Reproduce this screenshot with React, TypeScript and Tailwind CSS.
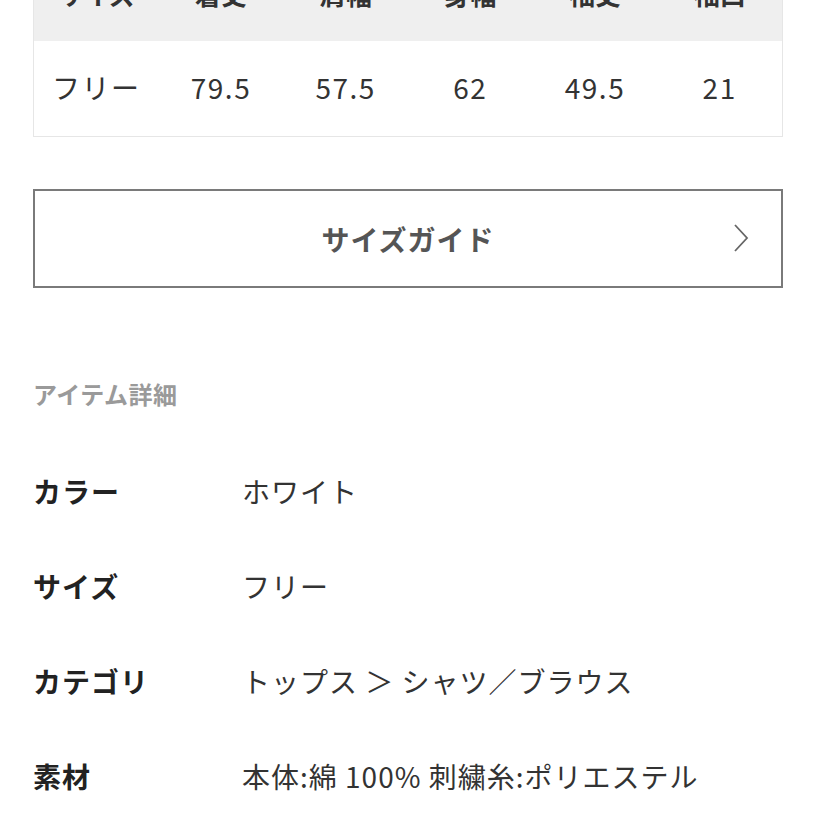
const headers = ['サイズ', '着丈', '肩幅', '身幅', '袖丈', '袖口'];
const values = ['フリー', '79.5', '57.5', '62', '49.5', '21'];

const details = [
  { label: 'カラー', value: 'ホワイト' },
  { label: 'サイズ', value: 'フリー' },
  { label: 'カテゴリ', value: 'トップス ＞ シャツ／ブラウス' },
  { label: '素材', value: '本体:綿 100% 刺繍糸:ポリエステル' },
];

const App = () => {
  return (
    <div
      className="w-[817px] h-[817px] overflow-hidden bg-white"
      style={{ fontFamily: '"Noto Sans CJK JP", "Noto Sans", sans-serif' }}
    >
      <div className="-mt-[56px] px-[33px]">
        <div className="w-[750px] border border-[#e6e6e6]">
          <div className="grid grid-cols-6 h-[96px] bg-[#efefef] items-center text-center text-[26px] font-bold text-[#333]">
            {headers.map((h) => (
              <div key={h}>{h}</div>
            ))}
          </div>
          <div className="grid grid-cols-6 h-[95px] pb-[3px] items-center text-center text-[28px] tracking-[1.5px] text-[#333]">
            {values.map((v) => (
              <div key={v}>{v}</div>
            ))}
          </div>
        </div>

        <button className="mt-[52px] w-[750px] h-[99px] border-2 border-[#7a7a7a] flex items-center relative">
          <span className="flex-1 text-center text-[28px] font-bold text-[#555] tracking-[1px]">
            サイズガイド
          </span>
          <svg
            className="absolute right-[32px] top-[33px]"
            width="16"
            height="28"
            viewBox="0 0 16 28"
            fill="none"
          >
            <path d="M2 1 L14 14 L2 27" stroke="#666" strokeWidth="1.8" />
          </svg>
        </button>

        <h3 className="mt-[94px] text-[24px] font-bold text-[#9a9a9a] tracking-[0.5px] leading-none">
          アイテム詳細
        </h3>

        <div className="mt-[37px] flex flex-col">
          {details.map((d) => (
            <div key={d.label} className="flex items-center h-[95px] text-[28px] tracking-[1px]">
              <div className="w-[209px] font-bold text-[#222]">{d.label}</div>
              <div className="text-[#333]">{d.value}</div>
            </div>
          ))}
        </div>
      </div>
    </div>
  );
};

export default App;
